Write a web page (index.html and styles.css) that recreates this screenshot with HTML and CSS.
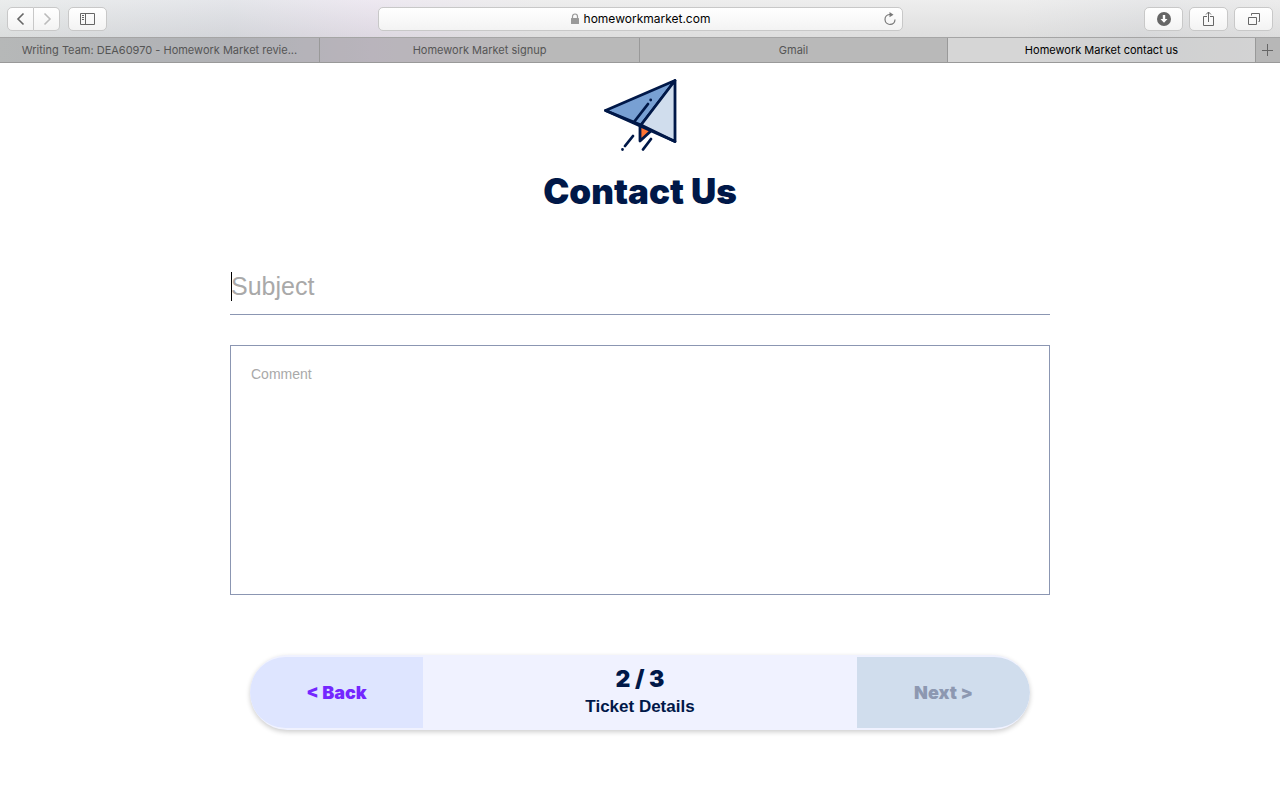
FILE: index.html
```html
<!DOCTYPE html>
<html lang="en">
<head>
    <meta charset="utf-8">
    <title>Homework Market contact us</title>
    <link rel="stylesheet" href="styles.css">
</head>
<body>

    <!-- Browser bar -->
    <header class="browser">
        <div class="toolbar">
            <div class="tools">
                <div class="history">
                    <button class="tool small" aria-label="Go back">
                        <svg width="10" height="14" viewBox="0 0 10 14"><path d="M7.5 1.5L2 7l5.500 5.500" fill="none" stroke="#666" stroke-width="1.600"/></svg>
                    </button>
                    <button class="tool small" aria-label="Go forward">
                        <svg width="10" height="14" viewBox="0 0 10 14"><path d="M2.500 1.500L8 7l-5.500 5.500" fill="none" stroke="#bbb" stroke-width="1.600"/></svg>
                    </button>
                </div>
                <button class="tool" aria-label="Sidebar">
                    <svg width="16" height="12" viewBox="0 0 16 12"><path d="M.5.5h14v11H.5zM5.500.5v11M2 2.500h2M2 4.500h2M2 6.500h2" fill="none" stroke="#666"/></svg>
                </button>
            </div>
            <div class="address">
                <span class="site">
                    <svg width="10" height="12" viewBox="0 0 10 12"><path d="M2.500 6V3.500a2.500 2.500 0 0 1 5 0V6" fill="none" stroke="#999" stroke-width="1.200"/><rect x="1" y="5" width="8" height="6" rx=".5" fill="#999"/></svg>
                    homeworkmarket.com
                </span>
                <button class="reload" aria-label="Reload">
                    <svg width="14" height="14" viewBox="0 0 14 14"><path d="M7.500 2.500H6.500A5 5 0 1 0 12 7.500" fill="none" stroke="#777" stroke-width="1.200"/><path d="M6.500 0l4 2.700-4 2.600z" fill="#777"/></svg>
                </button>
            </div>
            <div class="tools right">
                <button class="tool" aria-label="Downloads">
                    <svg width="14" height="14" viewBox="0 0 14 14"><circle cx="7" cy="7" r="7" fill="#666"/><path d="M5.800 3h2.400v4h2.300L7 10.800 3.500 7h2.300z" fill="#fff"/></svg>
                </button>
                <button class="tool" aria-label="Share">
                    <svg width="12" height="16" viewBox="0 0 12 16"><path d="M4 5.500H.5v9h10v-9H7M5.500 11V1M3 3.500L5.500 1 8 3.500" fill="none" stroke="#666"/></svg>
                </button>
                <button class="tool" aria-label="Show all tabs">
                    <svg width="14" height="14" viewBox="0 0 14 14"><path d="M1.500 5.500h8v7h-8zM4.500 3.500v-2h8v8h-1" fill="none" stroke="#666"/></svg>
                </button>
            </div>
        </div>
        <nav class="tabs">
            <a class="tab" href="#">Writing Team: DEA60970 - Homework Market revie...</a>
            <a class="tab" href="#">Homework Market signup</a>
            <a class="tab" href="#">Gmail</a>
            <a class="tab active" href="#">Homework Market contact us</a>
            <button class="new-tab" aria-label="New tab">
                <svg width="12" height="12" viewBox="0 0 12 12"><path d="M5.500 0v12M0 6.500h11" stroke="#666"/></svg>
            </button>
        </nav>
    </header>

    <!-- Contact form -->
    <main class="contact">
        <svg class="logo" width="76" height="76" viewBox="0 0 76 76" stroke="#001848" stroke-width="2.800" stroke-linejoin="round" stroke-linecap="round">
            <path d="M38 47v16l12-11z" fill="#ff7433"/>
            <path d="M3.500 32.500L73 2.500 39 47z" fill="#78a0d3"/>
            <path d="M73 2.500v61L39 47z" fill="#d0dded"/>
            <path d="M3.500 32.500l69.500 31M32 44l14-18M48.700 22v.1M31 58l-8 10M20.500 71.500v.1M49 61l-8 10.500" fill="none"/>
        </svg>
        <h1>Contact Us</h1>
        <form>
            <div class="subject">
                <input type="text" name="subject" placeholder="Subject" aria-label="Subject">
            </div>
            <textarea name="comment" placeholder="Comment" aria-label="Comment"></textarea>
            <div class="steps">
                <button type="button" class="back">&lt; Back</button>
                <div class="step">
                    <strong>2 / 3</strong>
                    <span>Ticket Details</span>
                </div>
                <button type="button" class="next" disabled>Next &gt;</button>
            </div>
        </form>
    </main>

</body>
</html>
```
FILE: styles.css
```css
* {
    box-sizing: border-box;
}

body {
    margin: 0;
    background: #fff;
    color: #001848;
    font-family: "Liberation Sans", Arial, sans-serif;
}

button {
    padding: 0;
    border: none;
    font: inherit;
    background: none;
}

svg {
    display: block;
}

.browser {
    font-family: Inter, sans-serif;
    background: linear-gradient(to right, #e2e5e5, #d9dbe1 18%, #e6dfeb 29%, #e6e6e6 42%, #e6e6e6 80%, #dddee0 89%, #e4e4e4);
}

.toolbar {
    display: grid;
    grid-template-columns: 1fr minmax(0, 525px) 1fr;
    align-items: center;
    height: 37px;
    padding: 0 7px;
    background: linear-gradient(rgba(255, 255, 255, 0.3), rgba(190, 190, 190, 0.2));
}

.tools {
    display: flex;
    gap: 8px;
}

.right {
    justify-content: flex-end;
    gap: 6px;
}

.history {
    display: flex;
}

.tool {
    display: flex;
    align-items: center;
    justify-content: center;
    width: 39px;
    height: 24px;
    border: 1px solid #c8c8c8;
    border-radius: 5px;
    background: linear-gradient(#fff, #f3f3f3);
}

.small {
    width: 27px;
}

.small:first-child {
    border-radius: 5px 0 0 5px;
}

.small:last-child {
    width: 26px;
    border-left: none;
    border-radius: 0 5px 5px 0;
}

.address {
    display: flex;
    align-items: center;
    height: 24px;
    padding: 0 5px;
    border: 1px solid #c8c8c8;
    border-radius: 5px;
    background: linear-gradient(#fff, #f3f3f3);
}

.site {
    display: flex;
    flex: 1;
    align-items: center;
    justify-content: center;
    gap: 4px;
    padding-left: 14px;
    font-size: 12px;
    color: #000;
}

.tabs {
    display: grid;
    grid-template-columns: 80fr 80fr 77fr 77fr 24px;
    height: 26px;
    border-top: 1px solid #a5a5a5;
    border-bottom: 1px solid #999;
}

.tab {
    min-width: 0;
    padding: 0 16px;
    overflow: hidden;
    border-right: 1px solid #999;
    background: rgba(100, 100, 100, 0.35);
    color: #555;
    font-size: 11px;
    line-height: 24px;
    text-align: center;
    text-decoration: none;
    white-space: nowrap;
}

.active {
    background: rgba(150, 150, 150, 0.2);
    color: #000;
}

.new-tab {
    display: flex;
    align-items: center;
    justify-content: center;
    background: rgba(100, 100, 100, 0.35);
}

.contact {
    max-width: 820px;
    margin: 0 auto;
    padding: 15px 0 40px;
}

.logo {
    margin: 0 auto;
}

h1 {
    margin: 15px 0 52px;
    font-family: Inter, sans-serif;
    font-size: 35px;
    font-weight: 900;
    line-height: 44px;
    text-align: center;
}

.subject {
    position: relative;
}

/* text cursor */
.subject::before {
    content: "";
    position: absolute;
    top: 7px;
    left: 1px;
    width: 1px;
    height: 29px;
    background: #000;
}

input {
    display: block;
    width: 100%;
    height: 50px;
    padding: 0 0 6px 1px;
    border: none;
    border-bottom: 1px solid #8b96b2;
    outline: none;
    background: none;
    font-family: inherit;
    font-size: 25px;
}

textarea {
    display: block;
    width: 100%;
    height: 250px;
    margin: 30px 0 60px;
    padding: 20px;
    border: 1px solid #8b96b2;
    outline: none;
    resize: none;
    font-family: inherit;
    font-size: 14px;
}

::placeholder {
    color: #a9a9a9;
}

.steps {
    display: flex;
    height: 75px;
    margin: 0 20px;
    padding: 2px 0;
    overflow: hidden;
    border-radius: 38px;
    background: #f0f2ff;
    box-shadow: 0 2px 5px rgba(0, 0, 0, 0.2);
}

.back, .next {
    width: 173px;
    font-family: Inter, sans-serif;
    font-size: 18px;
    font-weight: 900;
}

.back {
    border-radius: 36px 0 0 36px;
    background: #dee5ff;
    color: #7427ff;
}

.next {
    border-radius: 0 36px 36px 0;
    background: #d0dded;
    color: #8d98b1;
}

.step {
    display: flex;
    flex: 1;
    flex-direction: column;
    align-items: center;
    justify-content: center;
    font-weight: bold;
}

.step strong {
    font-family: Inter, sans-serif;
    font-size: 23px;
    font-weight: 900;
    line-height: 28px;
}

.step span {
    font-size: 17px;
    line-height: 28px;
}
```
